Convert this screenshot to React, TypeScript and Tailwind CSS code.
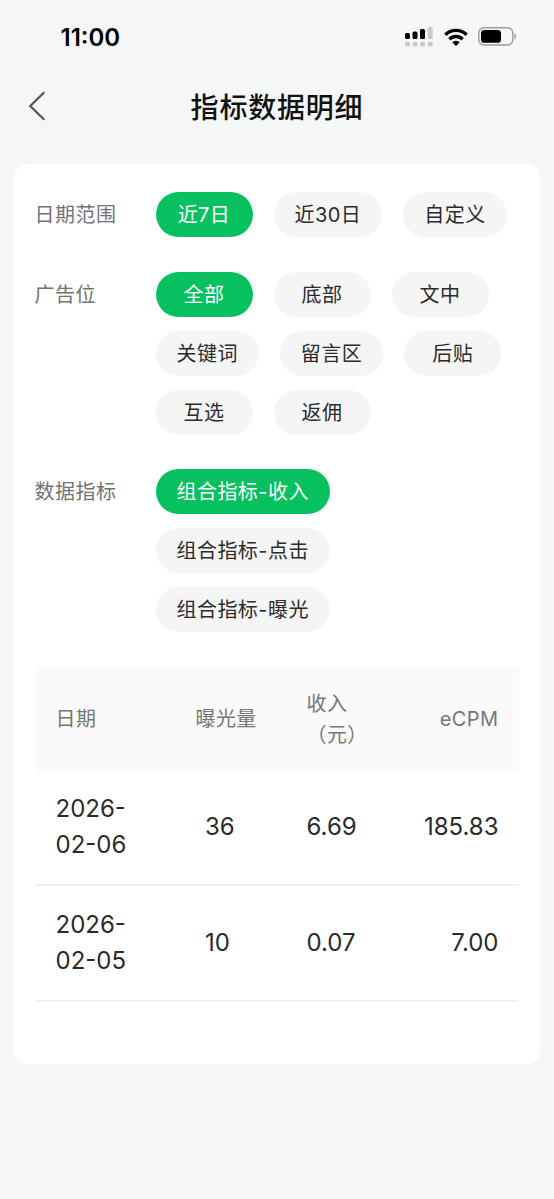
import { useState } from "react";

const groups = [
  {
    label: "日期范围",
    options: ["近7日", "近30日", "自定义"],
  },
  {
    label: "广告位",
    options: ["全部", "底部", "文中", "关键词", "留言区", "后贴", "互选", "返佣"],
  },
  {
    label: "数据指标",
    options: ["组合指标-收入", "组合指标-点击", "组合指标-曝光"],
  },
];

const rows = [
  { date: "2026-02-06", views: "36", income: "6.69", ecpm: "185.83" },
  { date: "2026-02-05", views: "10", income: "0.07", ecpm: "7.00" },
];

const SignalIcon = () => (
  <svg width="28" height="20" viewBox="0 0 28 20">
    <g fill="#000">
      <rect x="0" y="6" width="5" height="6" rx="1.6" />
      <rect x="7.5" y="4.6" width="5" height="7.4" rx="1.6" />
      <rect x="15" y="2" width="5" height="10" rx="1.6" />
    </g>
    <g fill="#c8caca">
      <rect x="22.7" y="0" width="5" height="12" rx="1.6" />
      <rect x="0" y="14.8" width="5" height="4.6" rx="1.5" />
      <rect x="7.5" y="14.8" width="5" height="4.6" rx="1.5" />
      <rect x="15" y="14.8" width="5" height="4.6" rx="1.5" />
      <rect x="22.7" y="14.8" width="5" height="4.6" rx="1.5" />
    </g>
  </svg>
);

const WifiIcon = () => (
  <svg width="24" height="18" viewBox="0 0 24 18">
    <g fill="none" stroke="#000" strokeWidth="3.4">
      <path d="M1.3 6.7a15.3 15.3 0 0 1 21.4 0" />
      <path d="M5.3 11.2a9.6 9.6 0 0 1 13.4 0" />
    </g>
    <path d="M12 18l-3.8-3.7a5.3 5.3 0 0 1 7.6 0z" fill="#000" />
  </svg>
);

const BatteryIcon = () => (
  <svg width="39" height="19" viewBox="0 0 39 19">
    <rect x="0.8" y="0.8" width="34" height="17.2" rx="5.2" fill="none" stroke="#9b9d9d" strokeWidth="1.4" />
    <rect x="3" y="3" width="20" height="12.8" rx="3.4" fill="#000" />
    <path d="M36.4 6.6c2.4 1 2.4 4.8 0 5.8z" fill="#9b9d9d" />
  </svg>
);

const Header = () => (
  <>
    <div className="flex h-[74px] items-center justify-between pl-[60.5px] pr-[37px]">
      <span className="pt-px text-[24px] font-semibold text-black">11:00</span>
      <div className="flex items-center pb-px">
        <SignalIcon />
        <span className="ml-[10.5px]">
          <WifiIcon />
        </span>
        <span className="ml-[10.5px]">
          <BatteryIcon />
        </span>
      </div>
    </div>
    <div className="grid h-[66px] grid-cols-[60px_1fr_60px] items-center">
      <button className="pb-[3px] pl-[28px]">
        <svg width="18" height="30" viewBox="0 0 18 30" fill="none" stroke="#555" strokeWidth="2.2">
          <path d="M16.3 1.2L2.3 15l14 13.8" />
        </svg>
      </button>
      <h1 className="pt-0.5 text-center text-[28px] font-medium tracking-[0.8px] text-[#111]">指标数据明细</h1>
    </div>
  </>
);

const App = () => {
  const [selected, setSelected] = useState([0, 0, 0]);

  const handleSelect = (group: number, option: number) => {
    setSelected(selected.map((value, i) => (i === group ? option : value)));
  };

  return (
    <div className="h-[1199px] w-[554px] bg-[#f5f7f7] font-['Inter','Noto_Sans_CJK_SC',sans-serif]">
      <Header />
      <div className="mr-[14px] ml-[13.5px] mt-6 h-[899.5px] rounded-[13px] bg-white px-[21px] pt-7">
        <div className="mb-[34px] flex flex-col gap-[34.5px]">
          {groups.map((group, g) => (
            <div key={group.label} className="flex">
              <div className="w-[121px] shrink-0 pt-0.5 text-[20px] leading-[43px] tracking-[0.5px] text-[#737373]">
                {group.label}
              </div>
              <div className="flex flex-wrap gap-x-[21px] gap-y-[14px]">
                {group.options.map((option, i) => (
                  <button
                    key={option}
                    onClick={() => handleSelect(g, i)}
                    className={`h-[45px] min-w-[97px] rounded-full px-[21px] pt-0.5 text-[20px] leading-[43px] tracking-[0.45px] ${
                      selected[g] === i ? "bg-[#07c160] text-white" : "bg-[#f5f5f5] text-[#2b2b2b]"
                    }`}
                  >
                    {option}
                  </button>
                ))}
              </div>
            </div>
          ))}
        </div>

        <div className="grid h-[104px] grid-cols-[140px_111px_90px_1fr] items-center bg-[#fafafa] pr-[20.5px] pl-[21px] pt-[3px] text-[20px] leading-[31px] tracking-[0.4px] text-[#767676]">
          <div>日期</div>
          <div>曝光量</div>
          <div>
            收入
            <br />
            （元）
          </div>
          <div className="text-right">eCPM</div>
        </div>
        {rows.map((row) => (
          <div
            key={row.date}
            className="grid h-[116px] grid-cols-[140px_111px_90px_1fr] items-center border-b-2 border-[#f0f0f0] pr-[20.5px] pl-[21px] text-[24px] leading-[36px] text-[#2b2b2b]"
          >
            <div className="w-[80px]">{row.date}</div>
            <div className="pl-[9.5px]">{row.views}</div>
            <div>{row.income}</div>
            <div className="text-right">{row.ecpm}</div>
          </div>
        ))}
      </div>
    </div>
  );
};

export default App;
